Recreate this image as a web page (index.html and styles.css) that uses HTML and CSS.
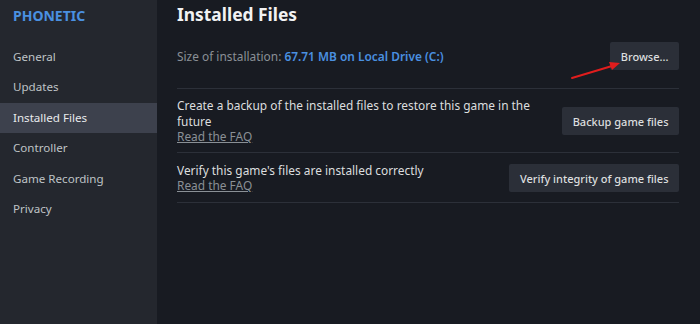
FILE: index.html
```html
<!DOCTYPE html>
<html lang="en">
<head>
    <meta charset="UTF-8">
    <title>Properties - Installed Files</title>
    <link rel="stylesheet" href="styles.css">
</head>
<body>
    <div class="window">
        <aside class="sidebar">
            <div class="game-title">PHONETIC</div>
            <ul class="nav">
                <li>General</li>
                <li>Updates</li>
                <li class="active">Installed Files</li>
                <li>Controller</li>
                <li>Game Recording</li>
                <li>Privacy</li>
            </ul>
        </aside>

        <main class="content">
            <h1>Installed Files</h1>

            <div class="row size-row">
                <div class="size">Size of installation: <span class="size-value">67.71 MB on Local Drive (C:)</span></div>
                <button class="btn">Browse...</button>
                <!-- annotation arrow pointing at the browse button -->
                <svg class="arrow" width="60" height="24" viewBox="0 0 60 24">
                    <line x1="2" y1="20" x2="42" y2="8" stroke="#e01d1d" stroke-width="2" stroke-linecap="round"/>
                    <polygon points="50,5 39,4 42,12" fill="#e01d1d"/>
                </svg>
            </div>

            <div class="row backup-row">
                <div class="desc">
                    <div>Create a backup of the installed files to restore this game in the future</div>
                    <a class="faq">Read the FAQ</a>
                </div>
                <button class="btn">Backup game files</button>
            </div>

            <div class="row verify-row">
                <div class="desc">
                    <div>Verify this game's files are installed correctly</div>
                    <a class="faq">Read the FAQ</a>
                </div>
                <button class="btn">Verify integrity of game files</button>
            </div>
        </main>
    </div>
</body>
</html>
```

FILE: styles.css
```css
body {
    margin: 0;
    background-color: #181b22;
    font-family: "Noto Sans", Arial, sans-serif;
    color: #dcdedf;
}

.window {
    display: flex;
    height: 324px;
}

.sidebar {
    width: 157px;
    flex-shrink: 0;
    background-color: #24272e;
}

.game-title {
    color: #4a90e0;
    font-weight: bold;
    font-size: 14px;
    padding: 6px 13px 0;
    height: 22px;
}

.nav {
    list-style: none;
    margin: 14px 0 0;
    padding: 0;
}

.nav li {
    height: 30.4px;
    line-height: 30px;
    padding-left: 13px;
    font-size: 11.6px;
    color: #bfc3c6;
}

.nav li.active {
    background-color: #3d414d;
    color: #e8eaec;
}

.content {
    flex: 1;
    padding: 0 21px 0 20px;
}

h1 {
    margin: 0;
    height: 30px;
    line-height: 28px;
    font-size: 17.4px;
    font-weight: bold;
    color: #f1f2f3;
}

.row {
    display: flex;
    align-items: center;
    justify-content: space-between;
    border-bottom: 1px solid #2c3039;
}

.size-row {
    position: relative;
    padding: 12px 0 18px;
}

.size {
    font-size: 11.9px;
    color: #8a9096;
}

.size-value {
    color: #4a90e0;
    font-weight: 600;
}

.backup-row {
    padding: 9px 0 7px;
}

.verify-row {
    padding: 10px 0 8px;
}

.desc {
    font-size: 11.9px;
    line-height: 15.5px;
    max-width: 360px;
    color: #dcdedf;
}

.faq {
    color: #8a9096;
    text-decoration: underline;
}

.btn {
    background-color: #2b2f38;
    color: #dcdedf;
    border: none;
    border-radius: 2px;
    font-family: "Noto Sans", Arial, sans-serif;
    font-size: 11px;
    font-weight: 500;
    padding: 0 10.5px;
    height: 28px;
}

.arrow {
    position: absolute;
    left: 393px;
    top: 28px;
}
```
